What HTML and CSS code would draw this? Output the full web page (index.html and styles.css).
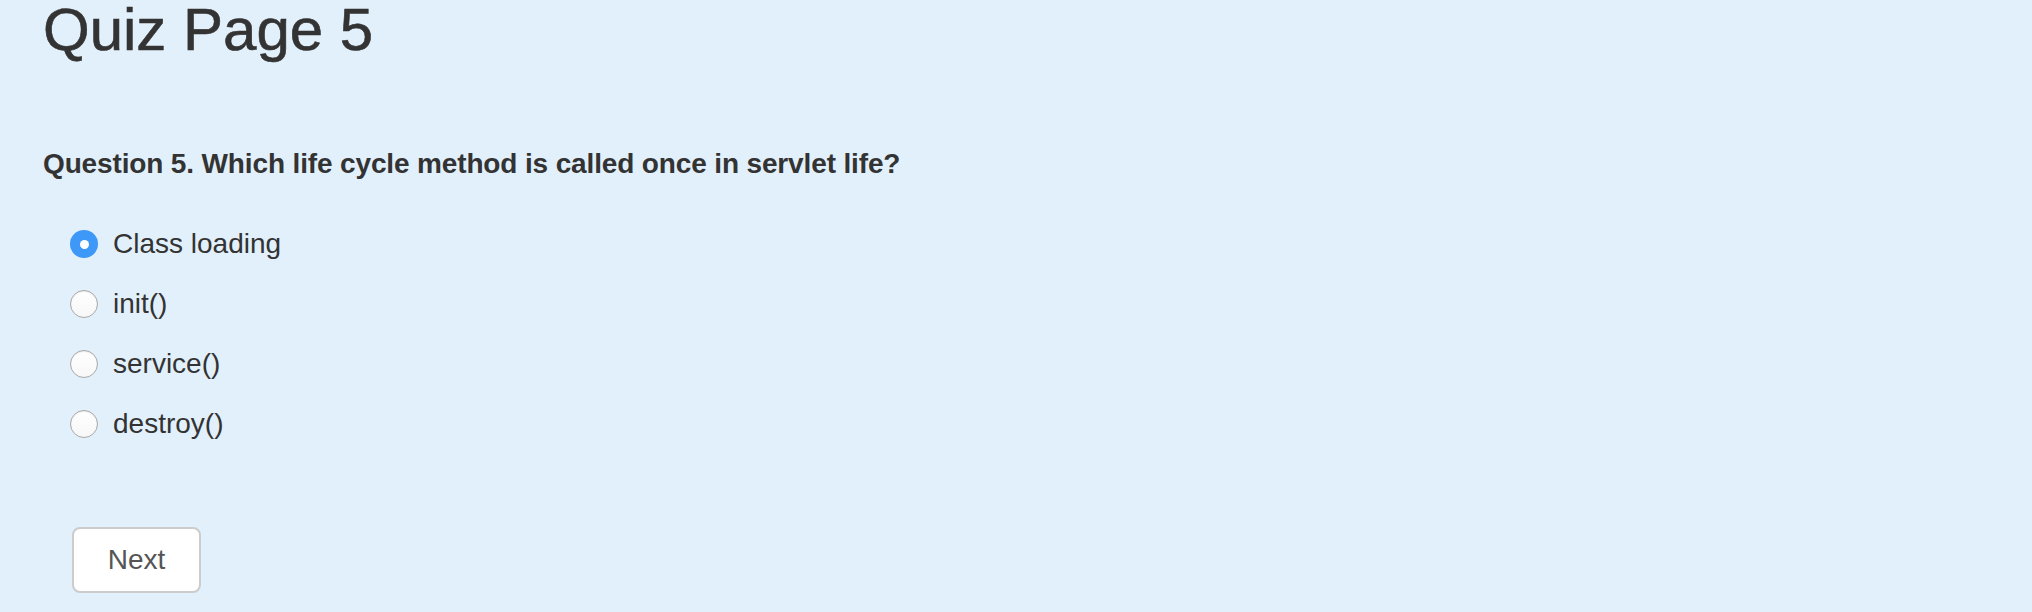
FILE: index.html
```html
<!DOCTYPE html>
<html lang="en">
<head>
<meta charset="utf-8">
<title>Quiz Page 5</title>
<link rel="stylesheet" href="styles.css">
</head>
<body>
<main class="page">
  <h1 class="title">Quiz Page 5</h1>
  <form class="quiz">
    <p class="question">Question 5. Which life cycle method is called once in servlet life?</p>
    <div class="options">
      <label class="option"><input class="radio" type="radio" name="q5" checked><span class="label">Class loading</span></label>
      <label class="option"><input class="radio" type="radio" name="q5"><span class="label">init()</span></label>
      <label class="option"><input class="radio" type="radio" name="q5"><span class="label">service()</span></label>
      <label class="option"><input class="radio" type="radio" name="q5"><span class="label">destroy()</span></label>
    </div>
    <div class="actions">
      <button class="btn" type="button">Next</button>
    </div>
  </form>
</main>
</body>
</html>
```

FILE: styles.css
```css
html, body {
  margin: 0;
  padding: 0;
  background: #e2f0fc;
}

body {
  font-family: "Liberation Sans", Arial, Helvetica, sans-serif;
  color: #333333;
}

.page {
  padding-left: 43px;
  display: flex;
  flex-direction: column;
}

.title {
  margin: 0;
  font-size: 60px;
  line-height: 60px;
  font-weight: 400;
  color: #333333;
  -webkit-text-stroke: 0.6px #333333;
}

.quiz {
  display: flex;
  flex-direction: column;
  margin-top: 84px;
}

.question {
  margin: 0;
  font-size: 28px;
  line-height: 40px;
  font-weight: 700;
  letter-spacing: -0.14px;
  color: #333333;
}

.options {
  display: flex;
  flex-direction: column;
  gap: 20px;
  margin-top: 40px;
  padding-left: 27px;
}

.option {
  display: flex;
  align-items: center;
  gap: 15px;
  height: 40px;
  font-size: 28px;
  line-height: 40px;
  color: #333333;
}

.radio {
  appearance: none;
  -webkit-appearance: none;
  margin: 0;
  width: 28px;
  height: 28px;
  border-radius: 50%;
  box-sizing: border-box;
  border: 1px solid #a9a9a9;
  background: linear-gradient(#ffffff, #f7f7f7);
  box-shadow: inset 0 1px 1px rgba(0, 0, 0, 0.08);
  display: flex;
  align-items: center;
  justify-content: center;
  flex: none;
}

.radio:checked {
  border: none;
  background: #3d98f8;
  box-shadow: none;
}

.radio:checked::after {
  content: "";
  width: 9px;
  height: 9px;
  border-radius: 50%;
  background: #ffffff;
}

.actions {
  display: flex;
  margin-top: 83px;
  padding-left: 29px;
}

.btn {
  box-sizing: border-box;
  width: 129px;
  height: 66px;
  padding: 11px 0;
  border: 2px solid #cccccc;
  border-radius: 8px;
  background: #ffffff;
  font-family: "Liberation Sans", Arial, Helvetica, sans-serif;
  font-size: 28px;
  line-height: 40px;
  color: #555555;
  text-align: center;
}
```
